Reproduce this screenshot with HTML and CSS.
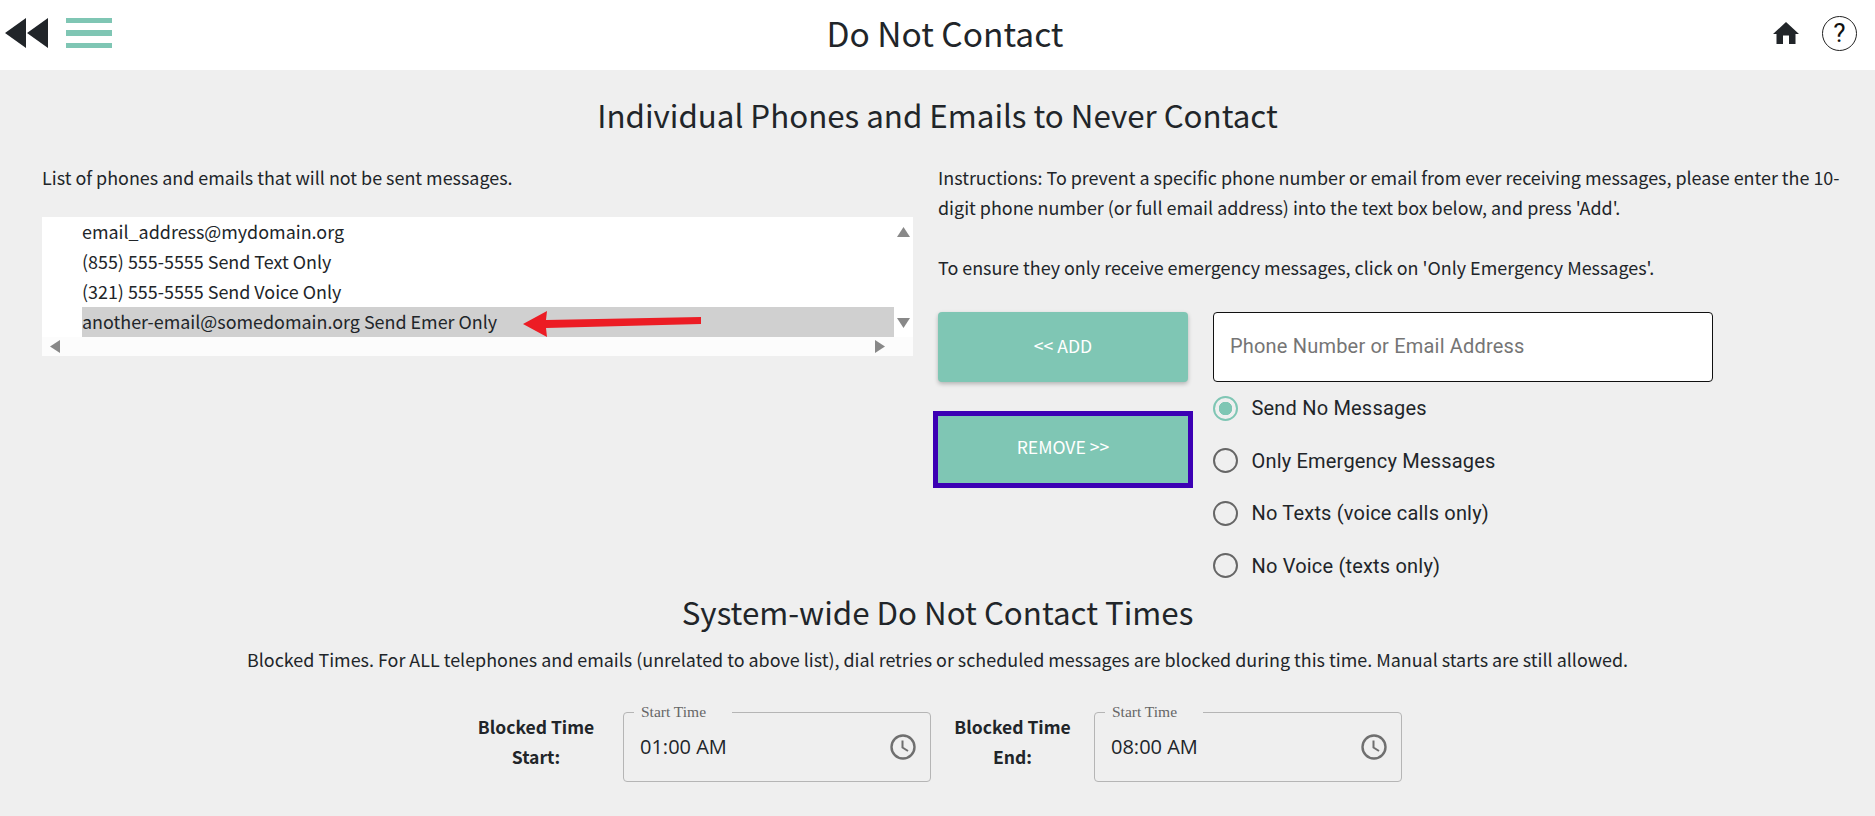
FILE: index.html
```html
<!DOCTYPE html>
<html lang="en">
<head>
  <meta charset="UTF-8">
  <title>Do Not Contact</title>
  <link rel="stylesheet" href="styles.css">
</head>
<body>
  <header class="topbar">
    <div class="topbar__left">
      <svg class="icon-back" width="44" height="30" viewBox="0 0 44 30"><path d="M0 15 21 0V30ZM22 15 43 0V30Z" fill="#212529"/></svg>
      <div class="burger"><span></span><span></span><span></span></div>
    </div>
    <h1 class="topbar__title">Do Not Contact</h1>
    <div class="topbar__right">
      <svg class="icon-home" width="26" height="22" viewBox="0 0 26 22"><path d="M13 0 26 12H22.500V22H16V13.500H10V22H3.500V12H0Z" fill="#212529"/></svg>
      <div class="help">?</div>
    </div>
  </header>

  <main class="page">
    <h2 class="heading">Individual Phones and Emails to Never Contact</h2>
    <div class="columns">
      <section class="col-left">
        <p class="intro">List of phones and emails that will not be sent messages.</p>
        <div class="listbox">
          <div class="listbox__body">
            <ul class="listbox__items">
              <li>email_address@mydomain.org</li>
              <li>(855) 555-5555 Send Text Only</li>
              <li>(321) 555-5555 Send Voice Only</li>
              <li class="is-selected">another-email@somedomain.org Send Emer Only</li>
            </ul>
            <div class="vbar">
              <svg width="13" height="10" viewBox="0 0 13 10"><path d="M6.500 0 13 10H0Z" fill="#888"/></svg>
              <svg width="13" height="10" viewBox="0 0 13 10"><path d="M6.500 10 13 0H0Z" fill="#888"/></svg>
            </div>
          </div>
          <div class="hbar">
            <svg width="10" height="13" viewBox="0 0 10 13"><path d="M0 6.500 10 0V13Z" fill="#888"/></svg>
            <svg width="10" height="13" viewBox="0 0 10 13"><path d="M10 6.500 0 0V13Z" fill="#888"/></svg>
          </div>
          <svg class="red-arrow" width="180" height="30" viewBox="0 0 180 30"><path d="M0 15 24 2 23 11 178 8 178 15 23 19 24 28Z" fill="#ec1c24"/></svg>
        </div>
      </section>

      <section class="col-right">
        <p class="instructions">Instructions: To prevent a specific phone number or email from ever receiving messages, please enter the 10-digit phone number (or full email address) into the text box below, and press 'Add'.</p>
        <p class="instructions instructions--second">To ensure they only receive emergency messages, click on 'Only Emergency Messages'.</p>
        <div class="controls">
          <div class="buttons">
            <button class="btn">&lt;&lt; ADD</button>
            <button class="btn btn--focus">REMOVE &gt;&gt;</button>
          </div>
          <div class="entry">
            <div class="text-input">Phone Number or Email Address</div>
            <div class="radios">
              <div class="radio is-on"><span class="radio__dot"></span>Send No Messages</div>
              <div class="radio"><span class="radio__dot"></span>Only Emergency Messages</div>
              <div class="radio"><span class="radio__dot"></span>No Texts (voice calls only)</div>
              <div class="radio"><span class="radio__dot"></span>No Voice (texts only)</div>
            </div>
          </div>
        </div>
      </section>
    </div>

    <h2 class="heading heading--second">System-wide Do Not Contact Times</h2>
    <p class="blocked-note">Blocked Times. For ALL telephones and emails (unrelated to above list), dial retries or scheduled messages are blocked during this time. Manual starts are still allowed.</p>
    <div class="times">
      <div class="time-label time-label--start">Blocked Time<br>Start:</div>
      <fieldset class="time-field">
        <legend>Start Time</legend>
        <span>01:00 AM</span>
        <svg width="26" height="26" viewBox="0 0 26 26"><circle cx="13" cy="13" r="11.500" fill="none" stroke="#6f6f6f" stroke-width="2.400"/><path d="M12.500 6.500V13.500L18 17" fill="none" stroke="#6f6f6f" stroke-width="2"/></svg>
      </fieldset>
      <div class="time-label">Blocked Time<br>End:</div>
      <fieldset class="time-field">
        <legend>Start Time</legend>
        <span>08:00 AM</span>
        <svg width="26" height="26" viewBox="0 0 26 26"><circle cx="13" cy="13" r="11.500" fill="none" stroke="#6f6f6f" stroke-width="2.400"/><path d="M12.500 6.500V13.500L18 17" fill="none" stroke="#6f6f6f" stroke-width="2"/></svg>
      </fieldset>
    </div>
  </main>
</body>
</html>
```

FILE: styles.css
```css
:root {
  --teal: #7fc6b4;
  --ink: #212529;
  --page-bg: #efefef;
}
* {
  box-sizing: border-box;
}
body {
  margin: 0;
  height: 816px;
  overflow: hidden;
  background-color: var(--page-bg);
  color: var(--ink);
  font-family: "Noto Sans CJK JP", "Noto Sans", sans-serif;
  font-size: 17.920px;
}
p, h1, h2, ul {
  margin: 0;
  padding: 0;
  font-weight: 400;
}
/* top bar */
.topbar {
  display: flex;
  align-items: center;
  justify-content: space-between;
  height: 70px;
  padding: 0 18px 4px 5px;
  background-color: #fff;
  position: relative;
}
.topbar__left {
  display: flex;
  align-items: center;
  gap: 17px;
}
.burger {
  display: flex;
  flex-direction: column;
  gap: 7px;
  width: 46px;
}
.burger span {
  height: 5.500px;
  background-color: var(--teal);
}
.topbar__title {
  position: absolute;
  left: 0;
  right: 0;
  top: 10px;
  text-align: center;
  font-size: 33.500px;
  line-height: 46px;
  padding-left: 15px;
  pointer-events: none;
}
.topbar__right {
  display: flex;
  align-items: center;
  gap: 23px;
}
.help {
  width: 35px;
  height: 35px;
  border: 1.500px solid #222;
  border-radius: 50%;
  text-align: center;
  color: #111;
  font: 26px/32px "Roboto", sans-serif;
}
/* page */
.heading {
  text-align: center;
  font-size: 31.300px;
  line-height: 44px;
}
.page > .heading:first-child {
  padding-top: 23px;
}
.columns {
  display: flex;
  margin-top: 25px;
}
.col-left {
  width: 938px;
  padding-left: 42px;
}
.intro {
  line-height: 30px;
}
.listbox {
  position: relative;
  width: 871px;
  margin-top: 25px;
  background-color: #fff;
}
.listbox__body {
  display: flex;
  height: 120px;
}
.listbox__items {
  flex: 1;
  list-style: none;
  padding-left: 40px;
}
.listbox__items li {
  height: 30px;
  line-height: 28px;
}
.is-selected {
  background-color: #d0d0d0;
}
.vbar {
  width: 19px;
  display: flex;
  flex-direction: column;
  align-items: center;
  justify-content: space-between;
  padding: 10px 0 9px;
}
.hbar {
  height: 19px;
  display: flex;
  align-items: center;
  justify-content: space-between;
  padding: 0 28px 0 8px;
  background-color: #fcfcfc;
}
.red-arrow {
  position: absolute;
  left: 481px;
  top: 92px;
}
.col-right {
  width: 905px;
}
.instructions {
  line-height: 30px;
}
.instructions--second {
  margin-top: 30px;
}
.controls {
  display: flex;
  gap: 25px;
  margin-top: 30px;
}
.buttons {
  display: flex;
  flex-direction: column;
  gap: 34px;
  width: 250px;
}
.btn {
  height: 70px;
  padding: 0 0 4px;
  border: 0;
  border-radius: 4px;
  background-color: var(--teal);
  color: #fff;
  font-family: "Noto Sans CJK JP", sans-serif;
  font-size: 17.600px;
  box-shadow: 0 2px 4px rgba(0, 0, 0, 0.25);
}
.btn--focus {
  height: 67px;
  padding-bottom: 7px;
  border-radius: 0;
  outline: 5px solid #3c00b4;
}
.entry {
  width: 500px;
}
.text-input {
  height: 70px;
  padding-left: 16px;
  border: 1.500px solid #111;
  border-radius: 4px;
  background-color: #fff;
  color: #757575;
  letter-spacing: 0.190px;
  font: 20px/66px "Roboto", sans-serif;
}
.radios {
  display: flex;
  flex-direction: column;
  gap: 26.500px;
  margin-top: 13px;
}
.radio {
  display: flex;
  align-items: center;
  gap: 13.500px;
  height: 26px;
  letter-spacing: 0.190px;
  font: 20px/26px "Roboto", sans-serif;
}
.radio__dot {
  width: 25px;
  height: 25px;
  border: 2.700px solid #666;
  border-radius: 50%;
}
.radio.is-on .radio__dot {
  border-color: var(--teal);
  background: radial-gradient(circle, var(--teal) 0 6.500px, transparent 7px);
}
/* system-wide block */
.heading--second {
  margin-top: 11.500px;
}
.blocked-note {
  text-align: center;
  line-height: 30px;
  margin-top: 10px;
}
.times {
  display: flex;
  justify-content: center;
  align-items: flex-start;
  margin-top: 38px;
  padding-right: 21px;
}
.time-label {
  width: 163px;
  text-align: center;
  font-size: 17.500px;
  font-weight: 700;
  line-height: 30px;
}
.time-label--start {
  width: 171px;
  padding-right: 3px;
}
.time-field {
  display: flex;
  align-items: center;
  justify-content: space-between;
  width: 308px;
  height: 78px;
  margin: -8px 0 0;
  padding: 0 14px 8px 16px;
  border: 1px solid #b5b5b5;
  border-radius: 4px;
  font: 20px/1 "Open Sans", sans-serif;
}
.time-field legend {
  margin-left: -6px;
  padding: 0 0 0 7px;
  color: #666;
  font: 15.500px/16px "Liberation Serif", serif;
  width: 98px;
}
```
